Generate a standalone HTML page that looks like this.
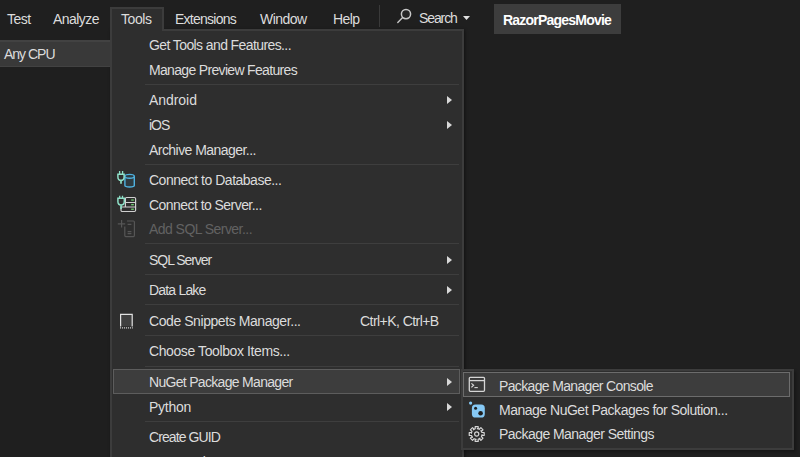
<!DOCTYPE html>
<html><head><meta charset="utf-8">
<style>
html,body{margin:0;padding:0;}
body{width:800px;height:457px;overflow:hidden;position:relative;background:#1f1f1f;font-family:"Liberation Sans",sans-serif;color:#dcdcdc;}
.t{position:absolute;white-space:nowrap;font-size:14px;line-height:16px;letter-spacing:-0.55px;}
.mb{top:11px;}
div,svg{position:absolute;}
#tab{left:110px;top:7px;width:54px;height:24px;background:#2e2e2e;border:2px solid #3c3c3c;border-bottom:none;box-sizing:border-box;}
#vsep{left:379px;top:5px;width:1px;height:22px;background:#3a3a3a;}
#proj{left:494px;top:4px;width:127px;height:30px;background:#3d3d3d;}
#cpu{left:0;top:40px;width:110px;height:27px;background:#393939;border-top:2px solid #424242;border-bottom:1px solid #424242;box-sizing:border-box;}
#menu{left:110px;top:29px;width:354px;height:440px;background:#2e2e2e;border:2px solid #3c3c3c;box-sizing:border-box;box-shadow:1px 1px 3px rgba(0,0,0,0.45);}
#tabfill{left:112px;top:9px;width:50px;height:24px;background:#2e2e2e;}
.it{left:149px;}
.sep{left:145px;width:314px;height:1px;background:#3e3e3e;}
.arr{left:447px;width:0;height:0;border-top:4px solid transparent;border-bottom:4px solid transparent;border-left:5px solid #d8d8d8;}
#hl{left:113px;top:369px;width:347px;height:25px;background:#3d3d3d;border:1px solid #5d5d5d;box-sizing:border-box;}
#sub{left:461px;top:369px;width:333px;height:81px;background:#2e2e2e;border:2px solid #3c3c3c;box-sizing:border-box;box-shadow:2px 2px 3px rgba(0,0,0,0.3);}
#hl2{left:463px;top:372px;width:327px;height:25px;background:#3d3d3d;border:1px solid #6c6c6c;box-sizing:border-box;}
</style></head><body>

<div class="t mb" style="left:7px">Test</div>
<div class="t mb" style="left:53px">Analyze</div>
<div id="menu"></div>
<div id="tab"></div>
<div id="tabfill"></div>
<div class="t mb" style="letter-spacing:-0.45px;left:121px">Tools</div>
<div class="t mb" style="letter-spacing:-0.74px;left:175px">Extensions</div>
<div class="t mb" style="left:260px">Window</div>
<div class="t mb" style="left:333px">Help</div>
<div id="vsep"></div>

<svg style="left:395px;top:7px" width="18" height="18" viewBox="0 0 18 18"><circle cx="11" cy="7.1" r="4.6" fill="#262626" stroke="#c8c8c8" stroke-width="1.5"/><line x1="7.6" y1="10.6" x2="2.8" y2="15.4" stroke="#c8c8c8" stroke-width="1.4" stroke-linecap="round"/></svg>
<div class="t" style="left:419px;top:10px;letter-spacing:-1.1px">Search</div>
<svg style="left:463px;top:16px" width="8" height="5" viewBox="0 0 8 5"><path d="M0 0H7L3.5 4Z" fill="#e0e0e0"/></svg>

<div id="proj"></div>
<div class="t" style="left:503px;top:12px;font-weight:bold;color:#fff;letter-spacing:-0.78px;font-size:14px">RazorPagesMovie</div>

<div id="cpu"></div>
<div class="t" style="letter-spacing:-1.0px;left:4px;top:46px">Any CPU</div>

<div id="hl"></div>
<div class="t it" style="letter-spacing:-0.6px;top:37px">Get Tools and Features...</div>
<div class="t it" style="letter-spacing:-0.67px;top:62px">Manage Preview Features</div>
<div class="sep" style="top:84px"></div>
<div class="t it" style="letter-spacing:-0.05px;top:92px">Android</div>
<div class="t it" style="letter-spacing:-1.05px;top:117px">iOS</div>
<div class="t it" style="top:142px">Archive Manager...</div>
<div class="sep" style="top:164px"></div>
<div class="t it" style="letter-spacing:-0.49px;top:172px">Connect to Database...</div>
<div class="t it" style="top:197px">Connect to Server...</div>
<div class="t it" style="top:221px;color:#626262">Add SQL Server...</div>
<div class="sep" style="top:243px"></div>
<div class="t it" style="letter-spacing:-1.05px;top:252px">SQL Server</div>
<div class="sep" style="top:274px"></div>
<div class="t it" style="letter-spacing:-0.81px;top:282px">Data Lake</div>
<div class="sep" style="top:304px"></div>
<div class="t it" style="letter-spacing:-0.43px;top:313px">Code Snippets Manager...</div>
<div class="t" style="left:360px;top:313px">Ctrl+K, Ctrl+B</div>
<div class="sep" style="top:335px"></div>
<div class="t it" style="letter-spacing:-0.4px;top:343px">Choose Toolbox Items...</div>
<div class="sep" style="top:366px"></div>
<div class="t it" style="letter-spacing:-0.69px;top:374px">NuGet Package Manager</div>
<div class="t it" style="letter-spacing:-0.27px;top:399px">Python</div>
<div class="sep" style="top:421px"></div>
<div class="t it" style="letter-spacing:-0.9px;top:429px">Create GUID</div>
<div class="t it" style="letter-spacing:-0.5px;top:454px">Error Lookup</div>

<div class="arr" style="top:96px"></div>
<div class="arr" style="top:121px"></div>
<div class="arr" style="top:256px"></div>
<div class="arr" style="top:286px"></div>
<div class="arr" style="top:378px"></div>
<div class="arr" style="top:403px"></div>

<!-- icons -->
<svg style="left:114px;top:168px" width="26" height="24" viewBox="0 0 26 24">
 <g fill="#2f3b40" stroke="#4fb2e0" stroke-width="1.4">
  <path d="M10.9 8.3V17.6C10.9 19.5 20.3 19.5 20.3 17.6V8.3"/>
  <ellipse cx="15.6" cy="8.3" rx="4.7" ry="1.9"/>
 </g>
 <g fill="#2e2e2e" stroke="#8fe0c8" stroke-width="1.5">
  <path d="M5.6 3V6.2M8.6 3V6.2" fill="none" stroke-width="1.3"/>
  <path d="M3.9 6.3H10.1V8.9C10.1 11 8.8 12.3 7 12.3C5.2 12.3 3.9 11 3.9 8.9Z"/>
  <path d="M7 12.6V15.8" stroke-width="1.7"/>
 </g>
</svg>
<svg style="left:114px;top:192px" width="26" height="24" viewBox="0 0 26 24">
 <g fill="none" stroke="#cfcfcf" stroke-width="1.2">
  <path d="M11.4 15V6.7A1.2 1.2 0 0 1 12.6 5.5H20.4A1.2 1.2 0 0 1 21.6 6.7V18.3A1.2 1.2 0 0 1 20.4 19.5H8.2A1.2 1.2 0 0 1 7 18.3V15H21.6M11.4 10.5H21.6"/>
 </g>
 <g fill="#6fd06f"><rect x="17.2" y="7.4" width="2.6" height="1.3"/><rect x="17.2" y="12" width="2.6" height="1.3"/><rect x="17.2" y="16.6" width="2.6" height="1.3"/></g>
 <g fill="#2e2e2e" stroke="#8fe0c8" stroke-width="1.5">
  <path d="M5.7 3.8V6.2M8.5 3.8V6.2" fill="none" stroke-width="1.3"/>
  <path d="M3.9 6.3H10.3V9.4C10.3 11.6 9 12.9 7.1 12.9C5.2 12.9 3.9 11.6 3.9 9.4Z"/>
  <path d="M7.1 13.2V17" stroke-width="1.7"/>
 </g>
</svg>
<svg style="left:114px;top:216px" width="26" height="24" viewBox="0 0 26 24">
 <g fill="none" stroke="#565656" stroke-width="1.2">
  <path d="M3.8 7.8H11.2M7.6 4V11.6"/>
  <path d="M10.8 10.4V19.6A1 1 0 0 0 11.8 20.6H19.4A1 1 0 0 0 20.4 19.6V6A1 1 0 0 0 19.4 5H13"/>
  <path d="M13.6 8.4H17.4M13.6 15.6H17.4M13.6 17.6H17.4"/>
 </g>
</svg>
<svg style="left:114px;top:308px" width="26" height="24" viewBox="0 0 26 24">
 <rect x="6.6" y="6.6" width="11.6" height="11.6" fill="#404040"/>
 <path d="M6.6 18.6V6.4H18.2V18.6" fill="none" stroke="#e2e2e2" stroke-width="1.2"/>
 <path d="M6 19.9H18.8" stroke="#d0d0d0" stroke-width="1.1" stroke-dasharray="1.1 0.9"/>
</svg>

<div id="sub"></div>
<div id="hl2"></div>
<div class="t" style="letter-spacing:-0.65px;left:499px;top:378px">Package Manager Console</div>
<div class="t" style="letter-spacing:-0.49px;left:499px;top:402px">Manage NuGet Packages for Solution...</div>
<div class="t" style="left:499px;top:426px">Package Manager Settings</div>

<svg style="left:464px;top:372px" width="26" height="24" viewBox="0 0 26 24">
 <rect x="5.3" y="5.3" width="15.2" height="14" rx="1" fill="#3a3a3a" stroke="#d6d6d6" stroke-width="1.3"/>
 <path d="M5.3 8.6H20.5" stroke="#d6d6d6" stroke-width="1.3"/>
 <path d="M7.4 11.4L9.6 13.2L7.4 15.4" fill="none" stroke="#d6d6d6" stroke-width="1.2"/>
 <path d="M10.4 15.6H13.8" stroke="#d6d6d6" stroke-width="1.1"/>
</svg>
<svg style="left:464px;top:398px" width="26" height="24" viewBox="0 0 26 24">
 <circle cx="6.6" cy="5.1" r="1.6" fill="#86c9f5"/>
 <rect x="7.9" y="6.6" width="12.9" height="12.9" rx="3.6" fill="#86c9f5"/>
 <circle cx="11.6" cy="10.3" r="1.5" fill="#1e1e1e"/>
 <circle cx="16.6" cy="15.3" r="2.3" fill="#1e1e1e"/>
</svg>
<svg style="left:464px;top:422px" width="26" height="24" viewBox="0 0 26 24">
 <g transform="translate(12.7 12)" fill="none" stroke="#d6d6d6" stroke-width="1.2" stroke-linejoin="round">
  <path d="M5.19 -1.49L7.45 -1.51L7.45 1.51L5.19 1.49L5.37 0.61L4.72 2.61L6.33 4.20L4.20 6.33L2.61 4.72L3.36 4.22L1.49 5.19L1.51 7.45L-1.51 7.45L-1.49 5.19L-0.61 5.37L-2.61 4.72L-4.20 6.33L-6.33 4.20L-4.72 2.61L-4.22 3.36L-5.19 1.49L-7.45 1.51L-7.45 -1.51L-5.19 -1.49L-5.37 -0.61L-4.72 -2.61L-6.33 -4.20L-4.20 -6.33L-2.61 -4.72L-3.36 -4.22L-1.49 -5.19L-1.51 -7.45L1.51 -7.45L1.49 -5.19L0.61 -5.37L2.61 -4.72L4.20 -6.33L6.33 -4.20L4.72 -2.61L4.22 -3.36Z"/>
  <circle r="2.1"/>
 </g>
</svg>


</body></html>
